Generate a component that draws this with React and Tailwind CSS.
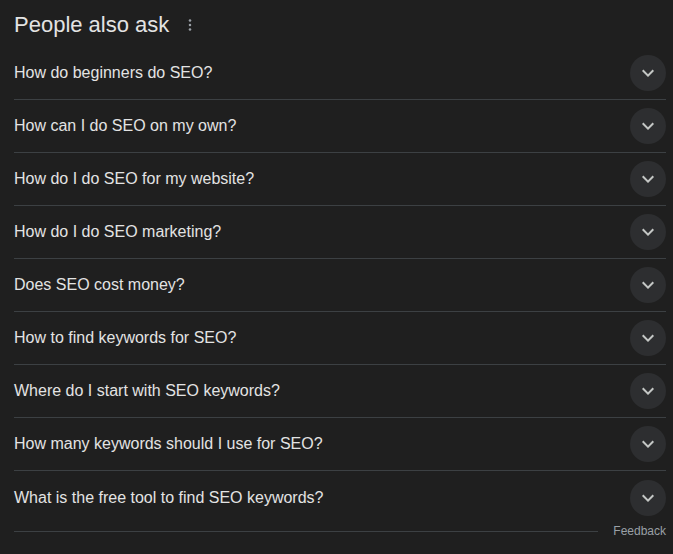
import React from 'react';

const questions = [
  'How do beginners do SEO?',
  'How can I do SEO on my own?',
  'How do I do SEO for my website?',
  'How do I do SEO marketing?',
  'Does SEO cost money?',
  'How to find keywords for SEO?',
  'Where do I start with SEO keywords?',
  'How many keywords should I use for SEO?',
  'What is the free tool to find SEO keywords?',
];

function Chevron() {
  return (
    <svg width="24" height="24" viewBox="0 0 24 24" fill="#c4c7c5">
      <path d="M16.59 8.59L12 13.17 7.41 8.59 6 10l6 6 6-6z" />
    </svg>
  );
}

export default function App() {
  return (
    <div className="w-[673px] h-[554px] bg-[#1f1f1f] pl-[14px] pr-[7px] pt-[11px] font-['Liberation_Sans',Arial,sans-serif] text-[#e3e3e3]">
      {/* Header */}
      <div className="flex items-center h-[28px] mb-[8px]">
        <h2 className="text-[22px] leading-[28px] font-normal">People also ask</h2>
        <svg className="ml-[12px]" width="18" height="18" viewBox="0 0 24 24" fill="#9aa0a6">
          <circle cx="12" cy="6" r="1.7" />
          <circle cx="12" cy="12" r="1.7" />
          <circle cx="12" cy="18" r="1.7" />
        </svg>
      </div>

      {/* Questions */}
      <div>
        {questions.map((q, i) => (
          <div
            key={i}
            className={`flex items-center justify-between h-[53px] ${i < questions.length - 1 ? 'border-b border-[#3c4043]' : ''}`}
          >
            <span className="text-[16px] leading-[24px]">{q}</span>
            <div className="w-[36px] h-[36px] rounded-full bg-[#2d2e30] flex items-center justify-center">
              <Chevron />
            </div>
          </div>
        ))}
      </div>

      {/* Feedback */}
      <div className="flex items-center">
        <div className="flex-1 border-t border-[#3c4043]" />
        <span className="ml-[15px] text-[12px] leading-[14px] text-[#9aa0a6]">Feedback</span>
      </div>
    </div>
  );
}
